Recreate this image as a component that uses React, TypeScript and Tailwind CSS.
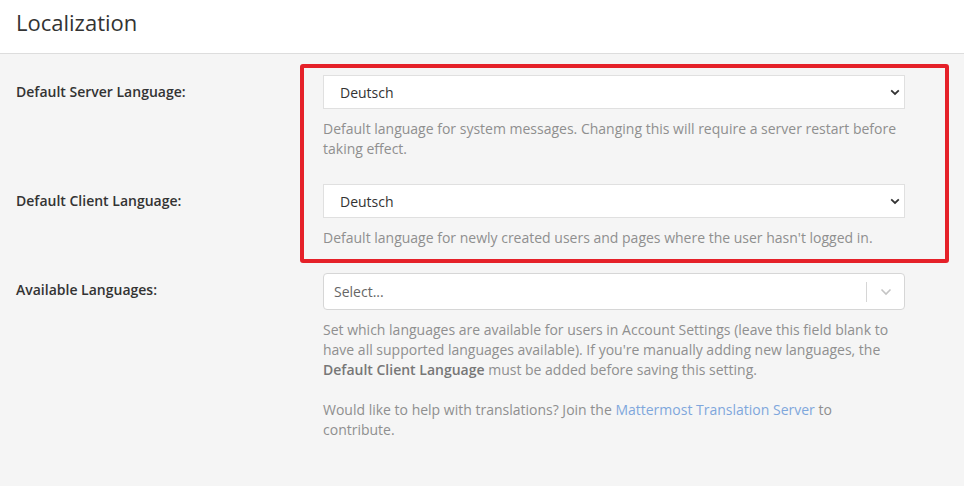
import React from "react";

function NativeSelect({ value }: { value: string }) {
  return (
    <div className="flex h-[34px] w-[582px] items-center justify-between border border-[#e0e0e0] bg-white pl-[16px] pr-[4px] text-[14px] text-[#333]">
      <span>{value}</span>
      <svg width="10" height="7" viewBox="0 0 10 7" className="mt-[1px]">
        <path d="M1.2 1.4 L5 5 L8.8 1.4" fill="none" stroke="#333" strokeWidth="1.8" />
      </svg>
    </div>
  );
}

function Row({ label, children }: { label: string; children: React.ReactNode }) {
  return (
    <div className="flex">
      <div className="w-[323px] pl-[16px] pt-[7px] text-[14px] font-semibold leading-[20px] text-[#333]">{label}</div>
      <div className="w-[582px]">{children}</div>
    </div>
  );
}

export default function App() {
  return (
    <div className="relative h-[486px] w-[964px] overflow-hidden bg-[#f5f5f5]" style={{ fontFamily: '"Open Sans", sans-serif' }}>
      <div className="h-[54px] border-b border-[#dddddd] bg-white pl-[16px] pt-[7px] text-[22px] leading-[30px] text-[#333]">
        Localization
      </div>
      <div className="flex flex-col gap-[25px] pt-[21px]">
        <Row label="Default Server Language:">
          <NativeSelect value="Deutsch" />
          <p className="mt-[10px] text-[14px] leading-[20px] text-[#8f8f8f]">
            Default language for system messages. Changing this will require a server restart before taking effect.
          </p>
        </Row>
        <Row label="Default Client Language:">
          <NativeSelect value="Deutsch" />
          <p className="mt-[10px] text-[14px] leading-[20px] text-[#8f8f8f]">
            Default language for newly created users and pages where the user hasn't logged in.
          </p>
        </Row>
        <Row label="Available Languages:">
          <div className="flex h-[37px] w-[582px] items-center rounded-[4px] border border-[#d6d6d6] bg-white pl-[10px] text-[14px] text-[#666]">
            <span className="flex-1">Select...</span>
            <div className="h-[20px] w-px bg-[#d6d6d6]" />
            <div className="flex w-[37px] items-center justify-center">
              <svg width="12" height="8" viewBox="0 0 12 8">
                <path d="M1.5 1.5 L6 6 L10.5 1.5" fill="none" stroke="#c4c4c4" strokeWidth="1.6" />
              </svg>
            </div>
          </div>
          <p className="mt-[10px] text-[14px] leading-[20px] text-[#8f8f8f]">
            Set which languages are available for users in Account Settings (leave this field blank to have all supported languages available). If you're manually adding new languages, the{" "}
            <span className="font-semibold text-[#777]">Default Client Language</span> must be added before saving this setting.
          </p>
          <p className="mt-[20px] text-[14px] leading-[20px] text-[#8f8f8f]">
            Would like to help with translations? Join the <span className="text-[#7fa7dc]">Mattermost Translation Server</span> to contribute.
          </p>
        </Row>
      </div>
      <div className="absolute left-[300px] top-[64px] h-[199px] w-[649px] rounded-[3px] border-[4px] border-[#e52129]" />
    </div>
  );
}
